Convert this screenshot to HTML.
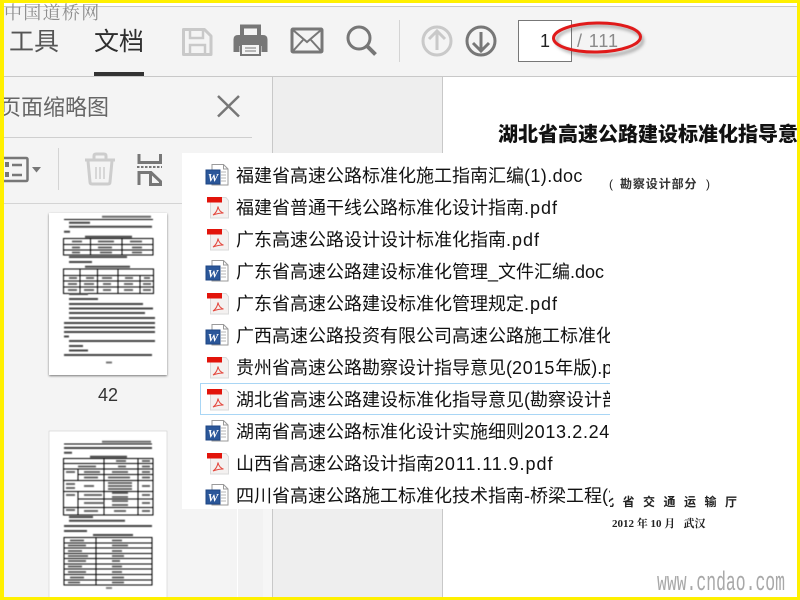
<!DOCTYPE html>
<html><head><meta charset="utf-8"><style>
html,body{margin:0;padding:0;width:800px;height:600px;overflow:hidden;background:#fff}
body{position:relative;font-family:"Liberation Sans","Noto Sans CJK SC",sans-serif}
.a{position:absolute;white-space:nowrap}
.it{position:absolute;left:54px;font-size:18px;line-height:24px;color:#111;white-space:nowrap}
.ic{position:absolute;left:23px}
.n{letter-spacing:.4px}
.f{letter-spacing:1px}
</style></head><body>
<div class="a" style="left:0;top:6px;width:800px;height:70px;background:#f4f4f4"></div>
<div class="a" style="left:0;top:6px;width:800px;height:1px;background:#c8c8c8"></div>
<div class="a" style="left:0;top:76px;width:800px;height:1px;background:#c8c8c8"></div>
<div class="a" style="left:0;top:77px;width:272px;height:523px;background:#f4f4f4"></div>
<div class="a" style="left:238px;top:204px;width:25px;height:396px;background:#f2f2f2"></div>
<div class="a" style="left:237px;top:204px;width:1px;height:396px;background:#fff"></div>
<div class="a" style="left:263px;top:204px;width:9px;height:396px;background:#f6f6f6"></div>
<div class="a" style="left:272px;top:77px;width:1px;height:523px;background:#c8c8c8"></div>
<div class="a" style="left:273px;top:77px;width:169px;height:523px;background:#eeeeee"></div>
<div class="a" style="left:442px;top:77px;width:1px;height:523px;background:#c8c8c8"></div>
<div class="a" style="left:0;top:137px;width:252px;height:1px;background:#cfcfcf"></div>
<div class="a" style="left:0;top:203px;width:272px;height:1px;background:#d4d4d4"></div>

<div class="a" style="left:9px;top:24px;font-size:25px;line-height:36px;color:#555">工具</div>
<div class="a" style="left:94px;top:24px;font-size:25px;line-height:36px;color:#2e2e2e">文档</div>
<div class="a" style="left:94px;top:72px;width:50px;height:4px;background:#333"></div>

<svg class="a" style="left:0;top:0" width="800" height="210" viewBox="0 0 800 210" fill="none">
<!-- save -->
<path d="M183.500 29.500h21l6.500 6.500v18.500h-27.500z" stroke="#c9c9c9" stroke-width="3" stroke-linejoin="round"/>
<path d="M190 29v9h13v-9M190 55V45h15v10" stroke="#c9c9c9" stroke-width="2.500"/>
<!-- print -->
<path d="M242 36V26.500h17V36" stroke="#777" stroke-width="4"/>
<path d="M238 35h25q4.500 0 4.500 4.500V52h-6v-6h-22v6h-6V39.500q0-4.500 4.500-4.500z" fill="#777"/>
<rect x="241" y="44" width="19" height="11" fill="#f4f4f4" stroke="#777" stroke-width="2"/>
<path d="M245 48h11M245 51h11" stroke="#777"/>
<!-- mail -->
<rect x="292" y="29" width="30" height="23" rx="1" stroke="#777" stroke-width="3"/>
<path d="M293 30l14 12 14-12M293 51l10-11M321 51l-10-11" stroke="#777" stroke-width="2"/>
<!-- search -->
<circle cx="359" cy="38" r="11" stroke="#777" stroke-width="3"/>
<path d="M367 46l8.500 8.500" stroke="#777" stroke-width="4"/>
<!-- sep -->
<path d="M399.500 20v42" stroke="#d4d4d4"/>
<!-- arrows -->
<circle cx="437" cy="41" r="14" stroke="#c9c9c9" stroke-width="3"/>
<path d="M437 50V32M429 39l8-8 8 8" stroke="#c9c9c9" stroke-width="3"/>
<circle cx="481" cy="41" r="14" stroke="#777" stroke-width="3"/>
<path d="M481 32v18M473 43l8 8 8-8" stroke="#777" stroke-width="3"/>
<!-- close -->
<path d="M218 96l21 20.500M239 96l-21 20.500" stroke="#777" stroke-width="2.500"/>
<!-- list icon -->
<path d="M4 158h22q1.500 0 1.500 1.500v20q0 1.500-1.500 1.500H4" stroke="#777" stroke-width="2.500"/>
<path d="M6 163h2v3H6zM6 173h2v3H6z" fill="#777" stroke="#777" stroke-width="2"/>
<path d="M12 165h10M12 175h10" stroke="#777" stroke-width="2.500"/>
<path d="M32 167h9l-4.500 5.500z" fill="#777"/>
<path d="M58.500 148v42" stroke="#d4d4d4"/>
<!-- trash -->
<path d="M85 160h30M94 160v-4q0-2 2-2h8q2 0 2 2v4" stroke="#cdcdcd" stroke-width="3"/>
<path d="M88 161l2 21q0 2 2 2h16q2 0 2-2l2-21" stroke="#cdcdcd" stroke-width="3"/>
<path d="M96 167v12M100 167v12M104 167v12" stroke="#cdcdcd" stroke-width="1.500"/>
<!-- extract -->
<path d="M139 154v8.500h21.500V154" stroke="#777" stroke-width="3"/>
<path d="M137 167h25" stroke="#777" stroke-width="2" stroke-dasharray="2.500 1.500"/>
<path d="M139 185v-12.500h12l9.500 9v3h-10v-11" stroke="#777" stroke-width="3"/>
</svg>

<div class="a" style="left:-16px;top:93px;width:125px;font-size:22px;line-height:30px;color:#666;text-align:right;overflow:hidden">页面缩略图</div>

<!-- page input -->
<div class="a" style="left:518px;top:20px;width:52px;height:40px;border:1px solid #777;background:#fff"></div>
<div class="a" style="left:540px;top:29px;font-size:18px;line-height:24px;color:#222">1</div>
<div class="a" style="left:577px;top:29px;font-size:18px;line-height:24px;color:#8a8a8a;letter-spacing:.9px">/ 111</div>

<!-- thumbs -->
<svg class="a" style="left:0;top:204px" width="272" height="396" viewBox="0 204 272 396" fill="none">
<rect x="49" y="213" width="118" height="162" fill="#fff" style="filter:drop-shadow(0 1px 1px #777)"/>
<g style="filter:blur(.4px)">
<path d="M102 216.800h49" stroke="#666" stroke-width="2"/>
<path d="M64 219.500h89" stroke="#000" stroke-width="1"/>
<g stroke="#000" stroke-width="1">
<rect x="63.500" y="238.500" width="89.500" height="16.500"/><path d="M63.500 244.500h89.500M63.500 250h89.500M90.500 238.500v16.500M122 238.500v16.500"/>
<rect x="63.500" y="269" width="90" height="24.500"/><path d="M63.500 275.500h90M63.500 281h90M63.500 287h90M80 269v24.500M97.500 269v24.500M118 269v24.500M140 276v17.500M118 275.500h35"/>
</g>
<g stroke="#444" stroke-width="2">
<path d="M69 222.700h21M69 226.700h83M64 231.700h6M85 236.700h47M69 257h58M69 262h23M85 266.700h45"/>
<path d="M69 294h19M69 299h29M69 304h74M69 308.500h84M69 313h76M69 318h86M64 323h91M64 327.500h91M64 332h91M64 336.500h5M69 341h86M69 346h14M69 350.500h19M64 355h88"/>
<path d="M106 362.500h6" stroke="#777"/>
<path d="M72 241.500h10M98 241.500h16M130 241.500h12M72 247.500h8M98 247.500h14M132 247.500h10M72 252.500h8M100 252.500h12M132 252.500h10M69 278h8M86 278h8M102 278h10M125 278h8M144 278h6M68 284h9M84 284h10M103 284h8M124 284h9M143 284h8M68 290h9M84 290h10M103 290h8M124 290h9M143 290h8" stroke="#555" stroke-width="1.800"/>
</g>
</g>
<rect x="49" y="431" width="118" height="170" fill="#fff" stroke="#cfcfcf" stroke-width=".6"/>
<g style="filter:blur(.4px)">
<path d="M102 441.700h49" stroke="#666" stroke-width="2"/>
<path d="M64 444h88" stroke="#000" stroke-width="1"/>
<g stroke="#444" stroke-width="2"><path d="M64 448h88M64 452.700h8M90 456.700h37M69 517h24M69 520.700h56M64 526h88M64 531h23M93 535h40"/></g>
<g stroke="#000" stroke-width="1">
<rect x="63.500" y="458.500" width="89.500" height="56.500"/>
<path d="M63.500 463.500h89.500M63.500 469h89.500M78 474.500h75M63.500 480.500h89.500M63.500 491.500h89.500M78 499h75M63.500 507.500h89.500M78 469v11.500M78 491.500v23.500M104 458.500v56.500M138 458.500v56.500"/>
<rect x="64" y="537.500" width="88" height="47.500"/>
<path d="M64 543h88M64 548h88M64 553.500h88M64 558.500h88M64 564h88M64 569h88M64 574.500h88M64 580h88M96 537.500v47.500"/>
</g>
<g stroke="#555" stroke-width="1.800"><path d="M116 461h10M142 461h8M78 466.500h18M118 466.500h8M142 466.500h8M66 472h9M84 472h16M112 472h16M142 472h8M84 477.500h14M108 477.500h22M142 477.500h8M66 484h9M66 488h9M84 486h10M108 483h24M108 486h24M108 489h24M142 486h8M66 495h9M84 495h18M112 493h16M112 497h16M142 495h8M84 503h20M112 501h16M112 505h16M142 503h8M66 510h9M84 511h14M114 511h12M142 511h8"/>
<path d="M70 540.500h14M112 540.500h10M68 545.500h18M112 545.500h16M68 551h14M112 551h10M68 556h20M112 556h12M68 561h18M112 561h8M68 566.500h14M112 566.500h10M68 572h18M112 572h10M70 577.500h14M112 577.500h12M68 582.500h12M112 582.500h12"/>
<path d="M106 588h6" stroke="#777"/></g>
</g>
</svg>
<div class="a" style="left:90px;top:383px;width:36px;text-align:center;font-size:18px;line-height:24px;color:#333">42</div>

<!-- document text -->
<div class="a" style="left:498px;top:117px;font-family:'Noto Sans CJK SC',sans-serif;font-weight:900;font-size:20px;line-height:32px;color:#111;width:299px;overflow:hidden">湖北省高速公路建设标准化指导意见</div>
<div class="a" style="left:620px;top:175px;font-family:'Noto Sans CJK SC',sans-serif;font-weight:700;font-size:12px;line-height:18px;color:#333;letter-spacing:.9px">勘察设计部分</div>
<div class="a" style="left:706px;top:175px;font-size:12px;line-height:18px;color:#222">)</div>
<div class="a" style="left:602px;top:492px;font-family:'Noto Sans CJK SC',sans-serif;font-weight:700;font-size:12px;line-height:20px;color:#222;letter-spacing:8.500px">北省交通运输厅</div>
<div class="a" style="left:612px;top:516px;font-family:'Liberation Serif','Noto Serif CJK SC',serif;font-weight:700;font-size:11px;line-height:16px;color:#222">2012 年 10 月&nbsp;&nbsp;&nbsp;武汉</div>

<!-- popup -->
<svg width="0" height="0" style="position:absolute"><defs>
<g id="w"><path d="M7 .5h11.500l4.500 4.500v16h-16z" fill="#fff" stroke="#9a9a9a"/><path d="M18.500 .5v4.500h4.500" fill="none" stroke="#9a9a9a"/><path d="M16 8h5M16 11h5M16 14h5M16 17h5" stroke="#b5b5b5"/><rect x="1" y="6" width="14" height="14" fill="#2b579a" stroke="#1e4483"/><text x="8" y="17.500" text-anchor="middle" font-family="Liberation Serif,serif" font-weight="700" font-style="italic" font-size="12" fill="#fff">W</text></g>
<g id="p"><path d="M5.500 .5h15.500l2.500 3v17.500h-18z" fill="#f4f1f0" stroke="#dadada"/><rect x="2" y="0" width="15" height="5.500" fill="#e2140b"/><path d="M8 18c3-2 4.500-5 5-8.500.5 3.500 3 6 5.500 6.500-3 0-6.500.5-10.500 2z" fill="none" stroke="#e4493f" stroke-width="1"/></g>
</defs></svg>
<div class="a" style="left:182px;top:153px;width:428px;height:356px;background:#fff;overflow:hidden">
<div class="a" style="left:18px;top:230px;width:420px;height:32px;box-sizing:border-box;background:#fff;border:1px solid #a9d6f5"></div>
<svg class="ic" style="top:11px" width="24" height="24"><use href="#w"/></svg><div class="it" style="top:11px">福建省高速公路标准化施工指南汇编<span class="n">(1).doc</span></div>
<svg class="ic" style="top:44px" width="24" height="24"><use href="#p"/></svg><div class="it" style="top:43px">福建省普通干线公路标准化设计指南<span class="f">.pdf</span></div>
<svg class="ic" style="top:76px" width="24" height="24"><use href="#p"/></svg><div class="it" style="top:75px">广东高速公路设计设计标准化指南<span class="f">.pdf</span></div>
<svg class="ic" style="top:107px" width="24" height="24"><use href="#w"/></svg><div class="it" style="top:107px">广东省高速公路建设标准化管理_文件汇编.doc</div>
<svg class="ic" style="top:140px" width="24" height="24"><use href="#p"/></svg><div class="it" style="top:139px">广东省高速公路建设标准化管理规定<span class="f">.pdf</span></div>
<svg class="ic" style="top:171px" width="24" height="24"><use href="#w"/></svg><div class="it" style="top:171px">广西高速公路投资有限公司高速公路施工标准化</div>
<svg class="ic" style="top:204px" width="24" height="24"><use href="#p"/></svg><div class="it" style="top:203px">贵州省高速公路勘察设计指导意见(<span style="letter-spacing:.8px">2015</span>年版).pdf</div>
<svg class="ic" style="top:236px" width="24" height="24"><use href="#p"/></svg><div class="it" style="top:235px">湖北省高速公路建设标准化指导意见(勘察设计部分)</div>
<svg class="ic" style="top:267px" width="24" height="24"><use href="#w"/></svg><div class="it" style="top:267px">湖南省高速公路标准化设计实施细则<span style="letter-spacing:.65px">2013.2.24</span></div>
<svg class="ic" style="top:300px" width="24" height="24"><use href="#p"/></svg><div class="it" style="top:299px">山西省高速公路设计指南<span style="letter-spacing:.9px">2011.11.9</span><span class="f">.pdf</span></div>
<svg class="ic" style="top:331px" width="24" height="24"><use href="#w"/></svg><div class="it" style="top:331px">四川省高速公路施工标准化技术指南-桥梁工程(2</div>
</div>
<div class="a" style="left:609px;top:175px;font-size:12px;line-height:18px;color:#222">(</div>

<!-- red ellipse -->
<svg class="a" style="left:540px;top:10px" width="120" height="60" viewBox="540 10 120 60" fill="none">
<ellipse cx="599.500" cy="40.500" rx="43" ry="15" stroke="#444" stroke-opacity=".45" stroke-width="3" style="filter:blur(1.500px)"/>
<ellipse cx="597" cy="37.500" rx="43.500" ry="14.500" stroke="#e01a1a" stroke-width="3" transform="rotate(-1 597 37.500)"/>
</svg>

<!-- watermarks -->
<div class="a" style="left:4px;top:0;font-family:'Noto Serif CJK SC',serif;font-size:18px;line-height:24px;color:#8e8e8e;letter-spacing:1.300px;filter:blur(.3px)">中国道桥网</div>
<svg class="a" style="left:650px;top:560px" width="145" height="36"><text x="7" y="30" textLength="128" lengthAdjust="spacingAndGlyphs" font-family="Liberation Mono,monospace" font-size="27" fill="#a8a8a8">www.cndao.com</text></svg>

<!-- yellow border -->
<div class="a" style="left:0;top:0;width:800px;height:3px;background:#fff000"></div>
<div class="a" style="left:0;top:597px;width:800px;height:3px;background:#fff000"></div>
<div class="a" style="left:0;top:0;width:4px;height:600px;background:#fff000"></div>
<div class="a" style="left:797px;top:0;width:3px;height:600px;background:#fff000"></div>
</body></html>
